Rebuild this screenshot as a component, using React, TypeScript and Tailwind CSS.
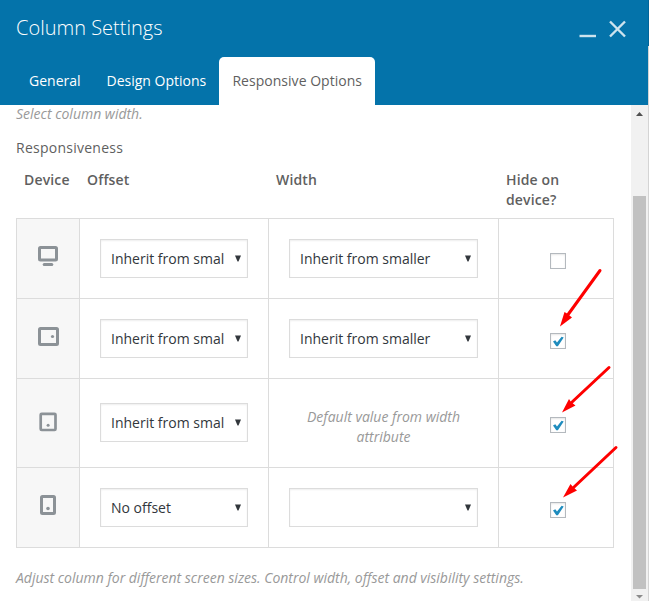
import type { ReactNode } from "react";

type Row = {
  device: "desktop" | "tablet-landscape" | "tablet" | "phone";
  offset: string;
  width: string | null;
  hidden: boolean;
};

const tabs = ["General", "Design Options", "Responsive Options"];

const rows: Row[] = [
  { device: "desktop", offset: "Inherit from smaller", width: "Inherit from smaller", hidden: false },
  { device: "tablet-landscape", offset: "Inherit from smaller", width: "Inherit from smaller", hidden: true },
  { device: "tablet", offset: "Inherit from smaller", width: null, hidden: true },
  { device: "phone", offset: "No offset", width: "", hidden: true },
];

export default function App() {
  return (
    <div className="relative flex h-[601px] w-[649px] overflow-hidden bg-white font-['Open_Sans',sans-serif] text-[14px] leading-5 text-[#5f5f5f]">
      <div className="flex w-[648px] flex-col">
        <Header />
        <div className="flex min-h-0 flex-1">
          <main className="flex-1 pl-4">
            <p className="-mt-px italic text-[#999]">Select column width.</p>
            <h2 className="mt-[14px] tracking-[0.25px]">Responsiveness</h2>
            <div className="mt-3 flex h-12 w-[598px] font-semibold tracking-[0.15px]">
              <span className="w-[71px] pl-2">Device</span>
              <span className="w-[189px]">Offset</span>
              <span className="w-[230px]">Width</span>
              <span className="w-[80px]">Hide on device?</span>
            </div>
            <div className="w-[598px] border-t border-l border-[#dcdcdc]">
              {rows.map((row) => (
                <SettingsRow key={row.device} row={row} />
              ))}
            </div>
            <p className="mt-5 whitespace-nowrap italic tracking-[-0.01px] text-[#999]">
              Adjust column for different screen sizes. Control width, offset and visibility settings.
            </p>
          </main>
          <Scrollbar />
        </div>
      </div>
      <div className="flex w-px flex-col">
        <div className="h-[46px] bg-[#03659a]" />
        <div className="flex-1 bg-[#d4d4d4]" />
      </div>
      <Arrows />
    </div>
  );
}

function Header() {
  return (
    <header className="flex h-[105px] flex-col justify-between bg-[#0473aa] text-white">
      <div className="flex h-[57px] items-center justify-between pr-[22px] pl-4">
        <h1 className="pb-[2px] text-[20px] leading-7 font-light">Column Settings</h1>
        <svg width="47" height="20" viewBox="0 0 47 20" className="mt-px" stroke="#cde3ee" strokeWidth="2.4" fill="none">
          <path d="M0.500 17H17" />
          <path d="M31 2.500L46 17.500M46 2.500L31 17.500" />
        </svg>
      </div>
      <nav className="flex h-12 pl-4">
        {tabs.map((tab) => (
          <button
            key={tab}
            className={
              tab === "Responsive Options"
                ? "w-[156px] rounded-t-[5px] bg-white tracking-[0.03px] text-[#5f5f5f]"
                : "px-[13px]"
            }
          >
            {tab}
          </button>
        ))}
      </nav>
    </header>
  );
}

function SettingsRow({ row }: { row: Row }) {
  const tall = row.width === null;

  return (
    <div className={tall ? "flex h-[89px]" : "flex h-20"}>
      <Cell className="w-[63px] bg-[#f7f7f7] pb-[5px]">
        <DeviceIcon device={row.device} />
      </Cell>
      <Cell className={tall ? "w-[189px] pb-px" : "w-[189px]"}>
        <Select className="w-[148px]" value={row.offset} />
      </Cell>
      <Cell className={tall ? "w-[230px] pt-2" : "w-[230px]"}>
        {row.width === null ? (
          <p className="w-[170px] text-center italic text-[#999]">Default value from width attribute</p>
        ) : (
          <Select className="w-[189px]" value={row.width} />
        )}
      </Cell>
      <Cell className={tall ? "w-[115px] pt-1 pl-[3px]" : "w-[115px] pt-[5px] pl-[3px]"}>
        <Checkbox checked={row.hidden} />
      </Cell>
    </div>
  );
}

function Cell({ className, children }: { className: string; children: ReactNode }) {
  return (
    <div className={`flex shrink-0 items-center justify-center border-r border-b border-[#dcdcdc] ${className}`}>
      {children}
    </div>
  );
}

function Select({ className, value }: { className: string; value: string }) {
  return (
    <div
      className={`flex h-[39px] items-center border border-[#dcdcdc] bg-white pr-[5px] pl-[10px] text-[#32373c] shadow-[inset_0_1px_2px_rgba(0,0,0,0.07)] ${className}`}
    >
      <span className="mr-[10px] flex-1 overflow-hidden whitespace-nowrap">{value}</span>
      <svg width="8" height="7" viewBox="0 0 8 7" className="mb-px shrink-0" fill="#32373c">
        <path d="M1 0.500H7L4.500 6.500H3.500Z" />
      </svg>
    </div>
  );
}

function Checkbox({ checked }: { checked: boolean }) {
  return (
    <span className="flex size-4 border border-[#b4b9be] bg-white shadow-[inset_0_1px_2px_rgba(0,0,0,0.1)]">
      {checked && (
        <svg width="14" height="14" viewBox="0 0 14 14" fill="#1e8cbe">
          <path d="M2 7.500L4.300 6.300L6 8.600L10.600 2.800L12.700 3.500L6.900 12.200H5.300Z" />
        </svg>
      )}
    </span>
  );
}

function DeviceIcon({ device }: { device: Row["device"] }) {
  return (
    <svg width="22" height="22" viewBox="0 0 22 22" fill="none" stroke="#8c9297" strokeWidth="3">
      {device === "desktop" && (
        <>
          <rect x="2.500" y="2.500" width="17" height="12.500" rx="1" />
          <path d="M7.200 19.500H14.800" strokeLinecap="round" />
        </>
      )}
      {device === "tablet-landscape" && (
        <>
          <rect x="2.500" y="3.500" width="18" height="16" rx="1" />
          <circle cx="15.500" cy="11.500" r="1.600" fill="#8c9297" stroke="none" />
        </>
      )}
      {device === "tablet" && (
        <>
          <rect x="3.700" y="3.800" width="14.800" height="16.200" rx="1" strokeWidth="2.700" />
          <circle cx="11.100" cy="15.200" r="1.500" fill="#8c9297" stroke="none" />
        </>
      )}
      {device === "phone" && (
        <>
          <rect x="4.500" y="2.500" width="13" height="17" rx="1" />
          <circle cx="11" cy="14.500" r="1.800" fill="#8c9297" stroke="none" />
        </>
      )}
    </svg>
  );
}

function Scrollbar() {
  return (
    <div className="flex w-[17px] flex-col items-center bg-[#f1f1f1]">
      <svg width="17" height="17" viewBox="0 0 17 17" fill="#505050" className="shrink-0">
        <path d="M5 11H12L8.500 7Z" />
      </svg>
      <div className="mt-[74px] h-[393px] w-[13px] bg-[#c1c1c1]" />
      <svg width="17" height="12" viewBox="0 0 17 12" fill="#8b8b8b" className="shrink-0">
        <path d="M5 6H12L8.500 9.500Z" />
      </svg>
    </div>
  );
}

// Red pointers laid over the checked boxes
function Arrows() {
  return (
    <svg
      className="pointer-events-none absolute inset-0"
      width="649"
      height="601"
      viewBox="0 0 649 601"
      fill="#fe0000"
      stroke="#fe0000"
      strokeWidth="3"
    >
      <path d="M600 270.500L567 316M609 367.500L571 403M616 447.500L573 488" strokeLinecap="round" />
      <g stroke="none">
        <path d="M560 326.500L564.500 312L567 313.500L572 317.500Z" />
        <path d="M562 412.500L569 399L571 402L575.500 405.500Z" />
        <path d="M563 497.500L570.500 484L573 487L577 490.500Z" />
      </g>
    </svg>
  );
}
